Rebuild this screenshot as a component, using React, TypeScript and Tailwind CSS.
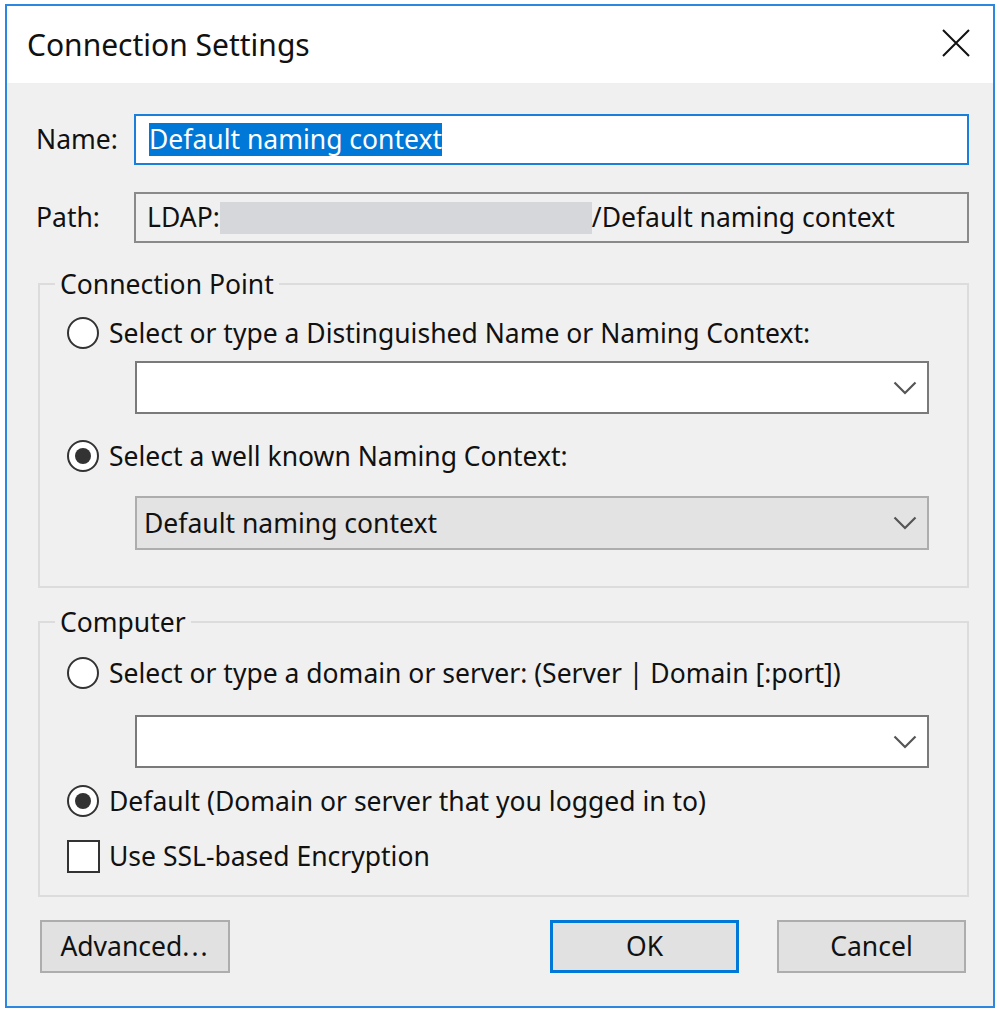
import React from "react";

function Chevron() {
  return (
    <svg width="24" height="14" viewBox="0 0 24 14" className="shrink-0">
      <path d="M1.5 1.5 L12 12 L22.5 1.5" fill="none" stroke="#555" strokeWidth="2.2" />
    </svg>
  );
}

function Radio({ checked }: { checked?: boolean }) {
  return (
    <div className="w-[32px] h-[32px] rounded-full border-[2.5px] border-[#333] bg-white flex items-center justify-center shrink-0">
      {checked && <div className="w-[16px] h-[16px] rounded-full bg-[#333]" />}
    </div>
  );
}

function Combo({ text, disabled }: { text?: string; disabled?: boolean }) {
  return (
    <div
      className={
        disabled
          ? "ml-[95px] mr-[38px] h-[54px] border-2 border-[#adadad] bg-[#e3e3e3] flex items-center justify-between pl-[7px] pr-[10px]"
          : "ml-[95px] mr-[38px] h-[53px] border-2 border-[#7a7a7a] bg-white flex items-center justify-between pl-[7px] pr-[10px]"
      }
    >
      <span>{text ?? ""}</span>
      <Chevron />
    </div>
  );
}

export default function App() {
  return (
    <div className="w-[1000px] h-[1012px] bg-white pt-[4px] pl-[5px] font-['Noto_Sans',sans-serif] text-[26.5px] text-[#111] leading-none">
      <div className="w-[990px] h-[1004px] border-2 border-[#2c87e0] flex flex-col">
        {/* Title bar */}
        <div className="h-[77px] bg-white flex items-center justify-between pl-[20px] pr-[23px] shrink-0">
          <span className="text-[30px]">Connection Settings</span>
          <svg width="28" height="28" viewBox="0 0 28 28" className="mb-[4px]">
            <path d="M1 1 L27 27 M27 1 L1 27" stroke="#111" strokeWidth="2" />
          </svg>
        </div>

        {/* Body */}
        <div className="flex-1 bg-[#f0f0f0] pl-[29px] pr-[24px] pt-[31px] flex flex-col">
          {/* Name */}
          <div className="flex items-center h-[51px]">
            <span className="w-[98px] shrink-0">Name:</span>
            <div className="flex-1 h-[51px] border-2 border-[#1a7fdb] bg-white flex items-center pl-[13px]">
              <span className="bg-[#0078d7] text-white h-[33px] flex items-center">Default naming context</span>
            </div>
          </div>

          {/* Path */}
          <div className="flex items-center h-[51px] mt-[27px]">
            <span className="w-[98px] shrink-0">Path:</span>
            <div className="flex-1 h-[51px] border-2 border-[#8a8a8a] bg-[#f0f0f0] flex items-center pl-[11px] overflow-hidden whitespace-nowrap">
              <span>LDAP:</span>
              <span className="inline-block w-[372px] h-[32px] bg-[#d5d7da] shrink-0" />
              <span>/Default naming context</span>
            </div>
          </div>

          {/* Connection Point */}
          <fieldset className="mt-[26px] ml-[2px] border-2 border-[#dcdcdc] p-0 m-0 min-w-0">
            <legend className="ml-[15px] px-[5px] h-[30px] leading-[30px]">Connection Point</legend>
            <div className="pt-[16px] pb-[36px]">
              <div className="flex items-center h-[36px] pl-[27px] gap-[10px]">
                <Radio />
                <span>Select or type a Distinguished Name or Naming Context:</span>
              </div>
              <div className="mt-[10px]">
                <Combo />
              </div>
              <div className="flex items-center h-[36px] pl-[27px] gap-[10px] mt-[24px]">
                <Radio checked />
                <span>Select a well known Naming Context:</span>
              </div>
              <div className="mt-[22px]">
                <Combo text="Default naming context" disabled />
              </div>
            </div>
          </fieldset>

          {/* Computer */}
          <fieldset className="mt-[19px] ml-[2px] border-2 border-[#dcdcdc] p-0 m-0 min-w-0">
            <legend className="ml-[15px] px-[5px] h-[30px] leading-[30px]">Computer</legend>
            <div className="pt-[18px] pb-[21px]">
              <div className="flex items-center h-[36px] pl-[27px] gap-[10px]">
                <Radio />
                <span>Select or type a domain or server: (Server | Domain [:port])</span>
              </div>
              <div className="mt-[24px]">
                <Combo />
              </div>
              <div className="flex items-center h-[36px] pl-[27px] gap-[10px] mt-[15px]">
                <Radio checked />
                <span>Default (Domain or server that you logged in to)</span>
              </div>
              <div className="flex items-center h-[36px] pl-[27px] gap-[9px] mt-[19px]">
                <div className="w-[33px] h-[33px] border-[2.5px] border-[#333] bg-white shrink-0" />
                <span>Use SSL-based Encryption</span>
              </div>
            </div>
          </fieldset>

          {/* Buttons */}
          <div className="flex items-center mt-[23px] pl-[4px] pr-[3px]">
            <div className="w-[190px] h-[53px] border-2 border-[#adadad] bg-[#e1e1e1] flex items-center justify-center">
              <span>Advanced<span className="tracking-[2px]">...</span></span>
            </div>
            <div className="flex-1" />
            <div className="w-[189px] h-[53px] border-[3px] border-[#0078d7] bg-[#e1e1e1] flex items-center justify-center">
              OK
            </div>
            <div className="w-[189px] h-[53px] border-2 border-[#adadad] bg-[#e1e1e1] flex items-center justify-center ml-[38px]">
              Cancel
            </div>
          </div>
        </div>
      </div>
    </div>
  );
}
